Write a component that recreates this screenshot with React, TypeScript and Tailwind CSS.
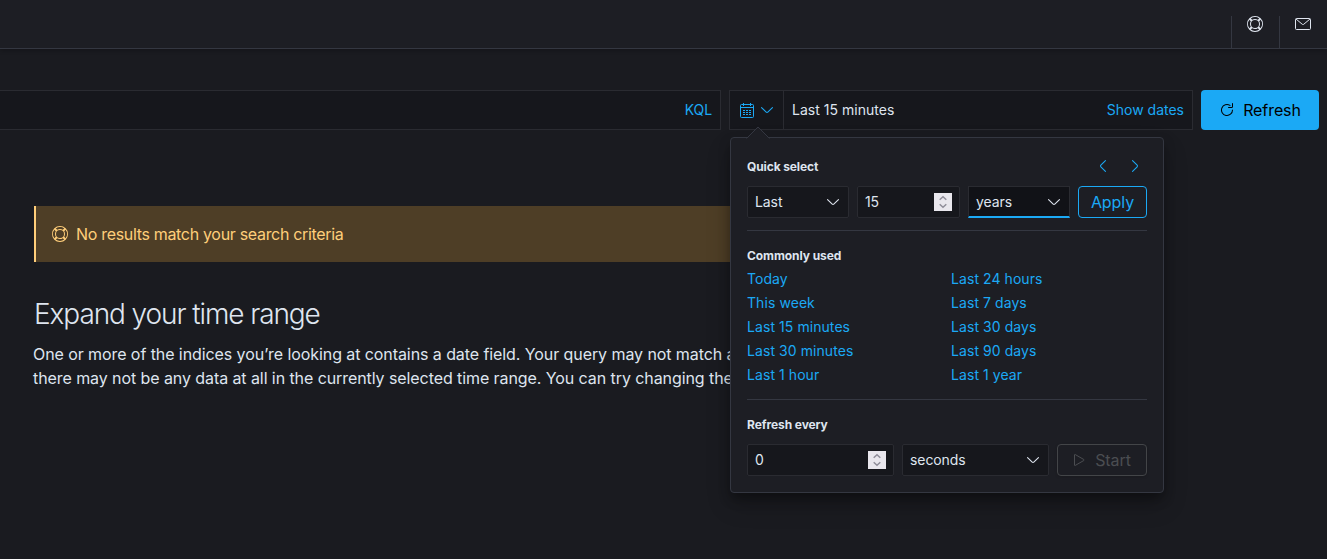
import React from 'react';

type IconProps = { className?: string };

const HelpIcon = ({ className = '' }: IconProps) => (
  <svg className={`h-4 w-4 shrink-0 ${className}`} viewBox="0 0 16 16" fill="currentColor">
    <path
      fillRule="evenodd"
      d="M13.6 12.186l-1.357-1.358c-.025-.025-.058-.034-.084-.056.53-.794.84-1.746.84-2.773a4.977 4.977 0 00-.84-2.772c.026-.02.059-.03.084-.056L13.6 3.813a6.96 6.96 0 010 8.373zM8 15a6.956 6.956 0 01-4.186-1.4l1.358-1.358c.025-.025.035-.057.055-.084C6.02 12.688 6.974 13 8 13a4.978 4.978 0 002.773-.84c.02.026.03.058.056.083l1.357 1.358A6.956 6.956 0 018 15zm-5.601-2.813a6.963 6.963 0 010-8.373l1.359 1.358c.024.025.057.035.084.055A4.97 4.97 0 003 8c0 1.027.31 1.98.842 2.773-.027.02-.06.03-.084.055l-1.36 1.358zm5.6-.187A4 4 0 118 4a4 4 0 010 8zM8 1c1.573 0 3.019.525 4.187 1.4l-1.357 1.358c-.025.025-.035.057-.056.084A4.979 4.979 0 008 3a4.979 4.979 0 00-2.773.842c-.02-.027-.03-.059-.055-.084L3.814 2.4A6.957 6.957 0 018 1zm0-1a8.001 8.001 0 10.003 16.002A8.001 8.001 0 008 0z"
    />
  </svg>
);

const MailIcon = () => (
  <svg className="h-4 w-4 shrink-0" viewBox="0 0 16 16" fill="none" stroke="currentColor">
    <rect x="0.5" y="2.5" width="15" height="11" rx="1" />
    <path d="M1 3l6.3 5.3a1.1 1.1 0 001.4 0L15 3" />
  </svg>
);

const ChevronIcon = ({ className = '' }: IconProps) => (
  <svg className={`h-4 w-4 shrink-0 ${className}`} viewBox="0 0 16 16" fill="currentColor">
    <path d="M13.069 5.157L8.384 9.768a.546.546 0 01-.768 0L2.93 5.158a.552.552 0 00-.771 0 .53.53 0 000 .759l4.684 4.61c.641.631 1.672.63 2.312 0l4.684-4.61a.53.53 0 000-.76.552.552 0 00-.771 0z" />
  </svg>
);

const CalendarIcon = () => (
  <svg className="h-4 w-4 shrink-0" viewBox="0 0 16 16" fill="none" stroke="currentColor">
    <rect x="1.5" y="2.5" width="13" height="13" rx="1" />
    <path d="M1.5 5.5h13M4.5 1v3M11.5 1v3" />
    <path d="M4 8.5h2M7 8.5h2M10 8.5h2M4 10.5h2M7 10.5h2M10 10.5h2M4 12.5h2M7 12.5h2M10 12.5h2" />
  </svg>
);

const RefreshIcon = () => (
  <svg className="h-4 w-4 shrink-0" viewBox="0 0 16 16" fill="currentColor">
    <path d="M11.228 2.942a.5.5 0 11-.538.842A5 5 0 1013 8a.5.5 0 111 0 6 6 0 11-2.772-5.058zM14 1.5v3A1.5 1.5 0 0112.5 6h-3a.5.5 0 010-1h3a.5.5 0 00.5-.5v-3a.5.5 0 111 0z" />
  </svg>
);

const PlayIcon = () => (
  <svg className="h-4 w-4 shrink-0" viewBox="0 0 16 16" fill="none" stroke="currentColor">
    <path d="M3.5 3v10a.5.5 0 00.75.43l8.5-4.9a.6.6 0 000-1.06l-8.5-4.9A.5.5 0 003.5 3z" />
  </svg>
);

const Spinner = () => (
  <svg className="h-[18px] w-[18px] shrink-0 bg-[#e9e7ed]" viewBox="0 0 18 18" fill="none" stroke="#8f8d99" strokeWidth="1.5">
    <path d="M5.7 6.8L9 3.8l3.3 3M5.7 11.2l3.3 3 3.3-3" />
  </svg>
);

const field =
  'flex h-8 items-center rounded-[2px] border border-[#2a2b31] bg-[#16171c] px-[7px] text-sm text-[#dfe5ef]';

const NumberField = ({ value, width }: { value: string; width: string }) => (
  <div className={`${field} ${width} justify-between`}>
    <span>{value}</span>
    <Spinner />
  </div>
);

const SelectField = ({ value, width }: { value: string; width: string }) => (
  <div className={`${field} ${width} justify-between`}>
    <span>{value}</span>
    <ChevronIcon />
  </div>
);

const ranges = [
  ['Today', 'Last 24 hours'],
  ['This week', 'Last 7 days'],
  ['Last 15 minutes', 'Last 30 days'],
  ['Last 30 minutes', 'Last 90 days'],
  ['Last 1 hour', 'Last 1 year'],
];

const QuickSelectPopover = () => (
  <section className="absolute top-[137px] left-[730px] h-[356px] w-[434px] rounded border border-[#343741] bg-[#1d1e24] px-4 pt-4 shadow-[0_6px_12px_-1px_rgba(0,0,0,0.35),0_12px_24px_rgba(0,0,0,0.2)]">
    <svg className="absolute -top-3 left-[15px] h-[13px] w-6" viewBox="0 0 24 13">
      <path d="M0.5 13L12 1l11.5 12z" fill="#1d1e24" />
      <path d="M0.5 12.5L12 1l11.5 11.5" fill="none" stroke="#343741" />
    </svg>
    <div className="flex h-6 items-center justify-between">
      <h3 className="pt-0.5 text-xs font-bold tracking-[-0.01em]">Quick select</h3>
      <div className="flex gap-4 pr-1 text-[#1ba9f5]">
        <ChevronIcon className="rotate-90" />
        <ChevronIcon className="-rotate-90" />
      </div>
    </div>
    <div className="mt-2 flex gap-2">
      <SelectField value="Last" width="w-[102px]" />
      <NumberField value="15" width="w-[103px]" />
      <div className="flex h-8 w-[102px] items-center justify-between border border-b-2 border-[#2a2b31] border-b-[#1ba9f5] bg-[#111217] px-[7px] text-sm text-[#dfe5ef]">
        <span>years</span>
        <ChevronIcon />
      </div>
      <button className="h-8 w-[69px] rounded border border-[#1ba9f5] text-base text-[#1ba9f5]">Apply</button>
    </div>
    <hr className="mt-3 border-[#343741]" />
    <h3 className="mt-4 text-xs leading-[18px] font-bold">Commonly used</h3>
    <ul className="mt-0.5 text-sm leading-6 tracking-[0.005em] text-[#1ba9f5]">
      {ranges.map(([left, right]) => (
        <li key={left} className="grid grid-cols-[204px_1fr]">
          <a>{left}</a>
          <a>{right}</a>
        </li>
      ))}
    </ul>
    <hr className="mt-3 border-[#343741]" />
    <h3 className="mt-4 text-xs leading-[18px] font-bold">Refresh every</h3>
    <div className="mt-[10px] flex gap-2">
      <NumberField value="0" width="w-[147px]" />
      <SelectField value="seconds" width="w-[147px]" />
      <button className="flex h-8 w-[90px] items-center justify-center gap-2 rounded border border-[#434548] pr-0.5 text-base text-[#4b4d51] shadow-sm">
        <PlayIcon />
        Start
      </button>
    </div>
  </section>
);

export default function App() {
  return (
    <div className="relative h-[559px] w-[1327px] overflow-hidden bg-[#1a1b20] font-['Inter',sans-serif] tracking-[-0.005em] text-[#dfe5ef]">
      <header className="flex h-[49px] items-end justify-end border-b border-[#343741] bg-[#1d1e24] shadow-[0_2px_4px_rgba(0,0,0,0.2)]">
        <div className="flex h-8 w-12 border-l border-[#343741] pl-[15px]">
          <HelpIcon />
        </div>
        <div className="flex h-8 w-12 border-l border-[#343741] pl-[15px]">
          <MailIcon />
        </div>
      </header>

      <div className="mt-[41px] flex h-10 gap-2 pr-2 text-sm">
        <div className="flex w-[721px] items-center justify-end border border-l-0 border-[#2a2b31] bg-[#16171c] pr-2 text-[#1ba9f5]">
          KQL
        </div>
        <div className="flex w-[464px] items-center border border-[#2a2b31] bg-[#16171c]">
          <div className="flex h-full w-[54px] items-center gap-1 border-r border-[#2a2b31] pl-[9px] text-[#1ba9f5]">
            <CalendarIcon />
            <ChevronIcon />
          </div>
          <span className="pl-2 tracking-[0.002em]">Last 15 minutes</span>
          <a className="ml-auto pr-2 tracking-normal text-[#1ba9f5]">Show dates</a>
        </div>
        <button className="flex w-[118px] items-center justify-center gap-2 rounded bg-[#1ba9f5] text-base text-black">
          <RefreshIcon />
          Refresh
        </button>
      </div>

      <main className="mt-[76px] pl-[34px]">
        <div className="flex h-14 w-[700px] items-center gap-2 border-l-2 border-[#ffce7a] bg-[#4e3e26] pl-4 text-base tracking-[-0.02em] text-[#ffce7a]">
          <HelpIcon />
          No results match your search criteria
        </div>
        <h2 className="mt-8 text-[28px] leading-10 font-light tracking-[-0.039em]">Expand your time range</h2>
        <p className="mt-2 -ml-px text-base leading-6 whitespace-nowrap">
          One or more of the indices you’re looking at contains a date field. Your query may not match a
          <br />
          there may not be any data at all in the currently selected time range. You can try changing the
        </p>
      </main>

      <QuickSelectPopover />
    </div>
  );
}
